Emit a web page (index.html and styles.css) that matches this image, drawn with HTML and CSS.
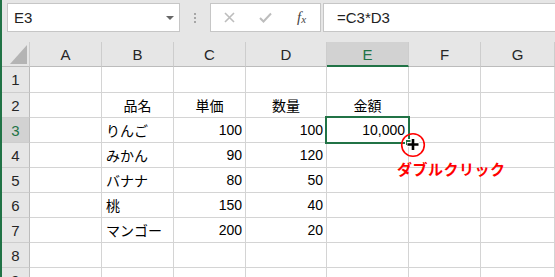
FILE: index.html
```html
<!DOCTYPE html>
<html lang="ja">
<head>
  <meta charset="UTF-8">
  <title>Excel - フィルハンドル</title>
  <link rel="stylesheet" href="styles.css">
</head>
<body>
  <!-- formula bar -->
  <div class="toolbar">
    <div class="name-box">
      <span>E3</span>
      <span class="drop"></span>
    </div>
    <div class="grip"><i></i><i></i><i></i></div>
    <div class="fx-box">
      <svg class="btn cancel" width="11" height="11" viewBox="0 0 11 11">
        <path d="M1 1L10 10M10 1L1 10" stroke="#bdbdbd" stroke-width="1.6"/>
      </svg>
      <svg class="btn enter" width="13" height="11" viewBox="0 0 13 11">
        <path d="M1 6L4.5 9.5L12 1.5" fill="none" stroke="#bdbdbd" stroke-width="2"/>
      </svg>
      <span class="fx">f<sub>x</sub></span>
    </div>
    <div class="formula">=C3*D3</div>
  </div>

  <!-- sheet -->
  <div class="sheet">
    <div class="hd corner"><div class="tri"></div></div>
    <div class="hd">A</div>
    <div class="hd">B</div>
    <div class="hd">C</div>
    <div class="hd">D</div>
    <div class="hd active">E</div>
    <div class="hd">F</div>
    <div class="hd">G</div>

    <div class="rh">1</div>
    <div class="c"></div><div class="c"></div><div class="c"></div><div class="c"></div><div class="c"></div><div class="c"></div><div class="c"></div>

    <div class="rh">2</div>
    <div class="c"></div>
    <div class="c mid">品名</div>
    <div class="c mid">単価</div>
    <div class="c mid">数量</div>
    <div class="c mid">金額</div>
    <div class="c"></div><div class="c"></div>

    <div class="rh active">3</div>
    <div class="c"></div>
    <div class="c txt">りんご</div>
    <div class="c num">100</div>
    <div class="c num">100</div>
    <div class="c num sel">10,000<span class="sel-box"><span class="handle"></span></span></div>
    <div class="c"></div><div class="c"></div>

    <div class="rh">4</div>
    <div class="c"></div>
    <div class="c txt">みかん</div>
    <div class="c num">90</div>
    <div class="c num">120</div>
    <div class="c"></div><div class="c"></div><div class="c"></div>

    <div class="rh">5</div>
    <div class="c"></div>
    <div class="c txt">バナナ</div>
    <div class="c num">80</div>
    <div class="c num">50</div>
    <div class="c"></div><div class="c"></div><div class="c"></div>

    <div class="rh">6</div>
    <div class="c"></div>
    <div class="c txt">桃</div>
    <div class="c num">150</div>
    <div class="c num">40</div>
    <div class="c"></div><div class="c"></div><div class="c"></div>

    <div class="rh">7</div>
    <div class="c"></div>
    <div class="c txt">マンゴー</div>
    <div class="c num">200</div>
    <div class="c num">20</div>
    <div class="c"></div><div class="c"></div><div class="c"></div>

    <div class="rh">8</div>
    <div class="c"></div><div class="c"></div><div class="c"></div><div class="c"></div><div class="c"></div><div class="c"></div><div class="c"></div>

    <div class="rh">9</div>
    <div class="c"></div><div class="c"></div><div class="c"></div><div class="c"></div><div class="c"></div><div class="c"></div><div class="c"></div>
  </div>

  <!-- callout: fill handle -->
  <div class="cursor-mark">
    <svg width="26" height="26" viewBox="0 0 26 26">
      <circle cx="13" cy="13" r="11.3" fill="none" stroke="#ff0000" stroke-width="1.6"/>
      <path d="M13 6.5V18.5M7 12.5H19" stroke="#fff" stroke-width="5"/>
      <path d="M13 7V18M7.5 12.5H18.5" stroke="#000" stroke-width="2.6"/>
    </svg>
  </div>
  <div class="callout">ダブルクリック</div>
</body>
</html>
```

FILE: styles.css
```css
body {
  margin: 0;
  height: 277px;
  overflow: hidden;
  border-left: 2px solid #217346;
  background-color: #fff;
  font-family: "Liberation Sans", "Noto Sans CJK JP", sans-serif;
  color: #000;
}

/* formula bar */
.toolbar {
  height: 42px;
  box-sizing: border-box;
  padding-top: 3px;
  background-color: #e6e6e6;
  display: flex;
  align-items: flex-start;
}

.name-box {
  margin-left: 5px;
  width: 173px;
  height: 29px;
  box-sizing: border-box;
  border: 1px solid #c6c6c6;
  background-color: #fff;
  display: flex;
  align-items: center;
  justify-content: space-between;
  padding: 0 5px 0 6px;
  font-size: 15px;
  color: #222;
}

.drop {
  width: 0;
  height: 0;
  border-left: 4px solid transparent;
  border-right: 4px solid transparent;
  border-top: 4px solid #666;
  margin-top: 1px;
}

.grip {
  width: 30px;
  height: 29px;
  display: flex;
  flex-direction: column;
  align-items: center;
  justify-content: center;
  gap: 2px;
}

.grip i {
  width: 2px;
  height: 2px;
  background-color: #a6a6a6;
}

.fx-box {
  width: 111px;
  height: 29px;
  box-sizing: border-box;
  border: 1px solid #c6c6c6;
  background-color: #fff;
  display: flex;
  align-items: center;
}

.btn {
  display: block;
}

.cancel {
  margin-left: 13px;
}

.enter {
  margin-left: 24px;
}

.fx {
  margin-left: 25px;
  font-family: "Liberation Serif", serif;
  font-style: italic;
  font-size: 15px;
  color: #444;
}

.fx sub {
  font-size: 11px;
  vertical-align: -1px;
}

.formula {
  flex: 1;
  margin-left: 2px;
  height: 29px;
  box-sizing: border-box;
  border: 1px solid #c6c6c6;
  border-right: none;
  background-color: #fff;
  padding-left: 13px;
  font-size: 15px;
  line-height: 27px;
  color: #222;
}

/* sheet grid */
.sheet {
  display: grid;
  grid-template-columns: 28px 72px 72px 72px 81px 82px 72px 74px;
  grid-template-rows: 25px 26px repeat(8, 25px);
}

.sheet > div {
  box-sizing: border-box;
  border-right: 1px solid #d4d4d4;
  border-bottom: 1px solid #d4d4d4;
  font-size: 14px;
  display: flex;
  align-items: center;
  white-space: nowrap;
}

.sheet > .hd {
  background-color: #e6e6e6;
  border-right-color: #cdcdcd;
  border-bottom-color: #bcbcbc;
  justify-content: center;
  font-size: 15px;
  color: #262626;
}

.sheet > .hd.active {
  background-color: #d2d2d2;
  color: #217346;
  border-bottom: 2px solid #217346;
  padding-top: 1px;
}

.sheet > .corner {
  justify-content: flex-end;
  align-items: flex-end;
  padding: 0 2px 2px 0;
}

.tri {
  width: 17px;
  height: 19px;
  background-color: #b4b4b4;
  clip-path: polygon(100% 0, 100% 100%, 0 100%);
}

.sheet > .rh {
  background-color: #e6e6e6;
  border-right-color: #bcbcbc;
  border-bottom-color: #cdcdcd;
  justify-content: center;
  font-size: 15px;
  color: #262626;
}

.sheet > .rh.active {
  background-color: #d2d2d2;
  color: #217346;
}

.sheet > .mid {
  justify-content: center;
}

.sheet > .txt {
  padding-left: 4px;
}

.sheet > .num {
  justify-content: flex-end;
  padding-right: 3px;
}

.sheet > .sel {
  position: relative;
}

/* selected cell outline */
.sel-box {
  position: absolute;
  top: -2px;
  left: -2px;
  width: 85px;
  height: 28px;
  box-sizing: border-box;
  border: 2px solid #217346;
}

.handle {
  position: absolute;
  right: -4px;
  bottom: -4px;
  width: 5px;
  height: 5px;
  background-color: #217346;
  border: 1px solid #fff;
}

/* callout */
.cursor-mark {
  position: absolute;
  left: 400px;
  top: 132px;
  width: 26px;
  height: 26px;
}

.callout {
  position: absolute;
  left: 397px;
  top: 161px;
  font-family: "Noto Sans CJK JP", sans-serif;
  font-weight: bold;
  font-size: 15px;
  line-height: 15px;
  letter-spacing: 0.5px;
  color: #ff0000;
}
```
